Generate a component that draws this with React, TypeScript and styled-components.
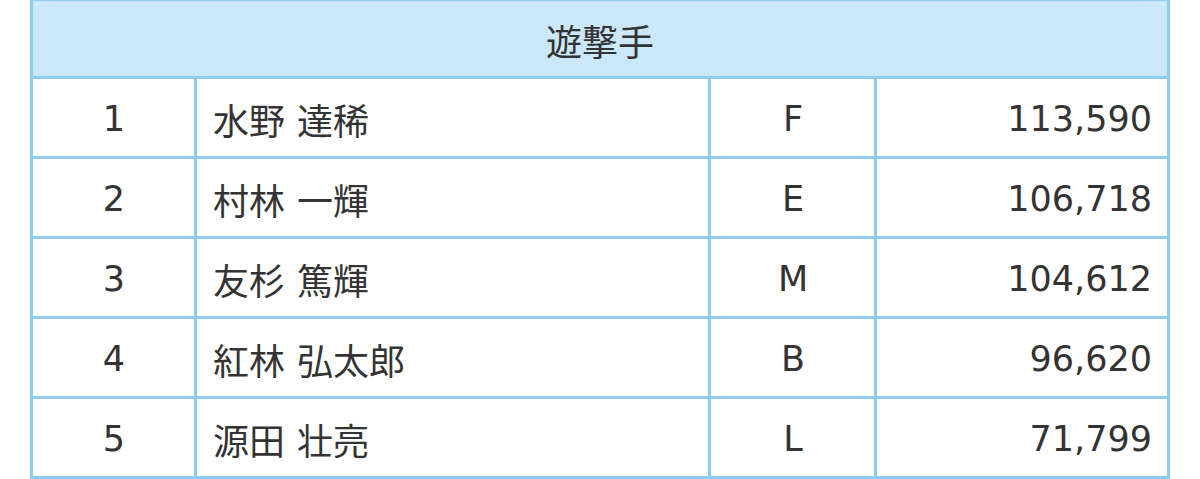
import React from "react";
import styled, { createGlobalStyle } from "styled-components";

const GlobalStyle = createGlobalStyle`
  html, body {
    margin: 0;
    padding: 0;
    background: #ffffff;
  }
  body {
    font-family: "DejaVu Sans", "Noto Sans CJK JP", sans-serif;
    color: #333333;
  }
`;

const Page = styled.div`
  width: 1200px;
  height: 479px;
  overflow: hidden;
  padding-left: 30px;
  box-sizing: border-box;
`;

const Frame = styled.div`
  width: 1140px;
  box-sizing: border-box;
  background: #8fcdee;
  padding: 1px 3px 3px 3px;
  display: grid;
  row-gap: 3px;
`;

const Header = styled.div`
  height: 75px;
  background: #cbe8fa;
  display: flex;
  align-items: center;
  justify-content: center;
  font-size: 36px;
  font-family: "Noto Sans CJK JP", sans-serif;
  color: #333333;
  padding-top: 2px;
  box-sizing: border-box;
`;

const Row = styled.div`
  display: grid;
  grid-template-columns: 161px 511px 163px 290px;
  column-gap: 3px;
`;

type Align = "left" | "center" | "right";

const Cell = styled.div<{ $align: Align }>`
  height: 77px;
  background: #ffffff;
  display: flex;
  align-items: center;
  justify-content: ${(p) =>
    p.$align === "left" ? "flex-start" : p.$align === "right" ? "flex-end" : "center"};
  padding: 2px 15px 0 16px;
  box-sizing: border-box;
  font-size: 35px;
  color: #333333;
  white-space: nowrap;
`;

const NameText = styled.span`
  font-family: "Noto Sans CJK JP", sans-serif;
  font-size: 36px;
  word-spacing: 4px;
`;

const rows = [
  { rank: "1", name: "水野 達稀", team: "F", value: "113,590" },
  { rank: "2", name: "村林 一輝", team: "E", value: "106,718" },
  { rank: "3", name: "友杉 篤輝", team: "M", value: "104,612" },
  { rank: "4", name: "紅林 弘太郎", team: "B", value: "96,620" },
  { rank: "5", name: "源田 壮亮", team: "L", value: "71,799" },
];

export default function App() {
  return (
    <>
      <GlobalStyle />
      <Page>
        <Frame>
          <Header>遊撃手</Header>
          {rows.map((r) => (
            <Row key={r.rank}>
              <Cell $align="center">{r.rank}</Cell>
              <Cell $align="left">
                <NameText>{r.name}</NameText>
              </Cell>
              <Cell $align="center">{r.team}</Cell>
              <Cell $align="right">{r.value}</Cell>
            </Row>
          ))}
        </Frame>
      </Page>
    </>
  );
}
